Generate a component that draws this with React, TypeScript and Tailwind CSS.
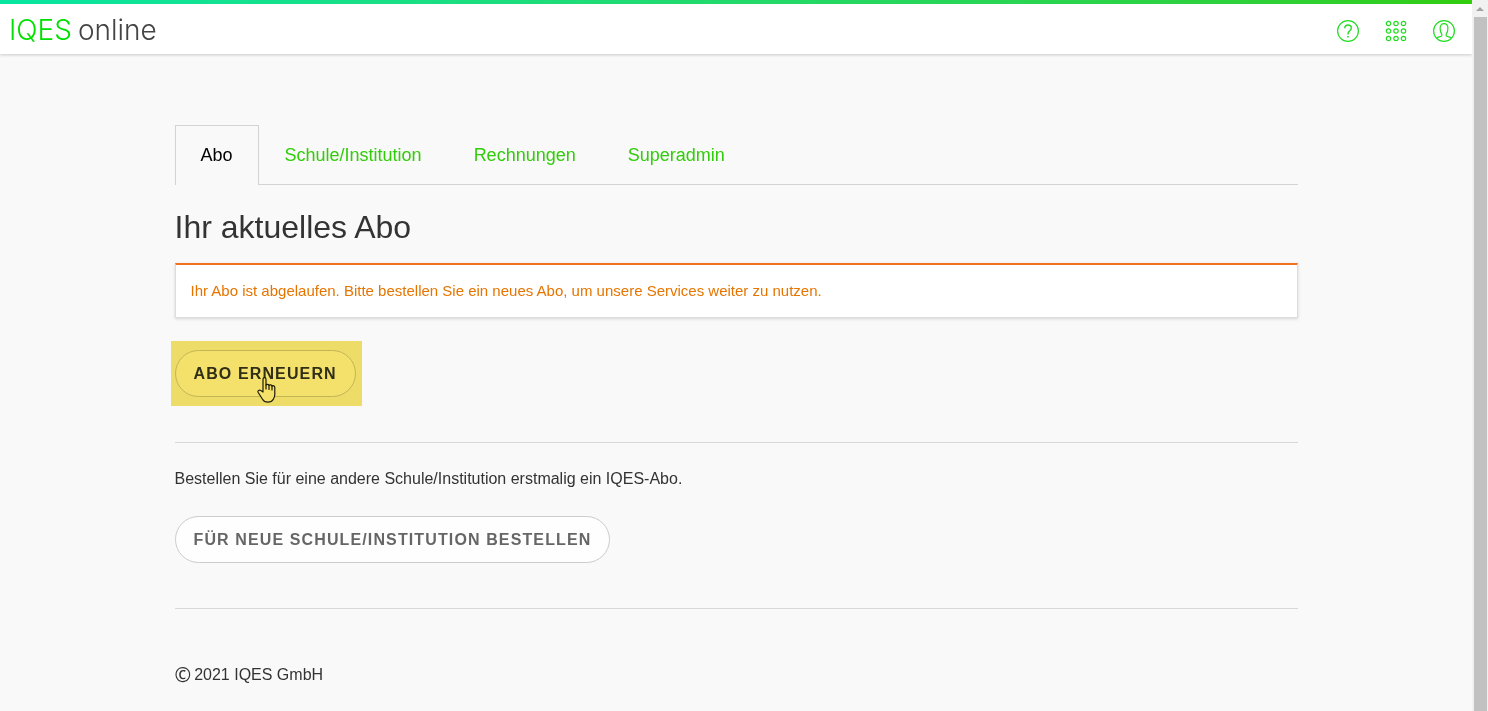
import React, { useState } from 'react'

const tabs = ['Abo', 'Schule/Institution', 'Rechnungen', 'Superadmin']

const HelpIcon = () => (
  <svg width="24" height="24" viewBox="0 0 24 24" fill="none" stroke="currentColor" strokeWidth="1.2" aria-hidden="true">
    <circle cx="12" cy="12" r="10.4" />
    <path d="M8.700 9.300C8.800 7.300 10 6 12 6C14 6 15.300 7.300 15.300 9C15.300 10.500 14.500 11.200 13.500 12.100C12.500 12.900 12 13.600 12 15V15.600" strokeWidth="1.400" />
    <path d="M12 17V18.600" strokeWidth="1.600" />
  </svg>
)

const AppsIcon = () => (
  <svg width="24" height="24" viewBox="0 0 24 24" fill="none" stroke="currentColor" strokeWidth="1.2" aria-hidden="true">
    {[4.5, 12, 19.5].map((cy) =>
      [4.5, 12, 19.5].map((cx) => <circle key={`${cx}-${cy}`} cx={cx} cy={cy} r="2.2" />)
    )}
  </svg>
)

const UserIcon = () => (
  <svg width="24" height="24" viewBox="0 0 24 24" fill="none" stroke="currentColor" strokeWidth="1.2" aria-hidden="true">
    <circle cx="12" cy="12" r="10.4" />
    <path d="M4.5 19C6 18 8 17.9 9.2 17.3C10 16.9 10.100 15.800 9.600 14.900C8.600 13.400 8.100 11.500 8.100 9.200C8.100 6.300 9.700 4.600 12 4.600C14.300 4.600 15.900 6.300 15.900 9.200C15.900 11.500 15.400 13.400 14.400 14.900C13.900 15.800 14 16.900 14.800 17.300C16 17.900 18 18 19.500 19" />
  </svg>
)

const HandPointer = () => (
  <svg
    className="absolute left-[82px] top-[26px] pointer-events-none"
    width="20"
    height="28"
    viewBox="0 0 20 28"
    fill="#f5e169"
    stroke="#1c1a08"
    strokeWidth="1.2"
    strokeLinejoin="round"
    strokeLinecap="round"
    aria-hidden="true"
  >
    <path d="M6 16V3.200C6 1.200 9 1.200 9 3.200V9C9.500 7.900 11.700 8.100 12 9.400C12.600 8.500 14.600 8.700 15 10.100C15.700 9.400 17.800 9.600 17.800 11.400V18.500C17.800 20.500 17.200 21.700 16.300 23.200C15.200 25.200 13.300 26.200 10.800 26.200C8.300 26.200 6.700 25.200 5.500 23.200L1.200 16.500C0.300 14.700 2.200 13.300 3.800 14.500Z" />
    <path d="M9 9V13M12 9.400V13.500M15 10.100V14" fill="none" />
  </svg>
)

const Header = () => (
  <header className="bg-white shadow-[0_1px_3px_rgba(0,0,0,0.2)]">
    <div className="h-1 bg-gradient-to-r from-[#06e5a0] to-[#32cd0a]" />
    <div className="h-[50px] pt-[2px] pl-[9px] pr-4 flex items-center justify-between">
      <a href="#" className="font-['Inter',sans-serif] font-light text-[28px] leading-8 flex gap-[6px]">
        <span className="text-[#00e000]">IQES</span>
        <span className="text-[#444444]">online</span>
      </a>
      <nav className="flex items-center gap-6 pt-[2px] text-[#22dd22]">
        <button aria-label="Hilfe"><HelpIcon /></button>
        <button aria-label="Apps"><AppsIcon /></button>
        <button aria-label="Profil"><UserIcon /></button>
      </nav>
    </div>
  </header>
)

const Scrollbar = () => (
  <div className="w-4 shrink-0 bg-[#f1f1f1] flex flex-col" aria-hidden="true">
    <div className="h-[17px] flex items-center justify-center">
      <svg width="8" height="4" viewBox="0 0 8 4" fill="#a3a3a3">
        <path d="M4 0l4 4H0z" />
      </svg>
    </div>
    <div className="flex-1 ml-[2px] mr-px bg-[#c1c1c1]" />
  </div>
)

const buttonClass =
  'h-[47px] px-[18px] rounded-full border border-[#cccccc] bg-[#fefefe] text-base font-bold uppercase tracking-[0.07em] cursor-pointer'

export default function App() {
  const [active, setActive] = useState('Abo')

  return (
    <div className="min-h-screen flex bg-[#f9f9f9] font-['Liberation_Sans',sans-serif] text-[#333333]">
      <div className="flex-1 min-w-0">
        <Header />

        <main className="max-w-[1123px] mx-auto pt-[71px]">
          <div role="tablist" className="flex text-lg">
            {tabs.map((tab) => (
              <button
                key={tab}
                role="tab"
                aria-selected={tab === active}
                onClick={() => setActive(tab)}
                className={
                  tab === active
                    ? 'h-[60px] px-[25px] pb-px border border-b-0 border-[#d3d3d3] text-black'
                    : 'h-[60px] px-[26px] border-b border-[#d3d3d3] text-[#32cd0a]'
                }
              >
                {tab}
              </button>
            ))}
            <div className="flex-1 border-b border-[#d3d3d3]" />
          </div>

          <h1 className="mt-[22px] mb-4 text-[32px] leading-10">Ihr aktuelles Abo</h1>

          <div className="px-[15px] pt-[15px] pb-4 bg-white border border-t-2 border-[#dddddd] border-t-[#f37021] shadow-[0_1px_3px_rgba(0,0,0,0.15)] text-[15px] leading-[21px] text-[#e67500]">
            Ihr Abo ist abgelaufen. Bitte bestellen Sie ein neues Abo, um unsere Services weiter zu nutzen.
          </div>

          <section className="mt-8 pb-[45px] flex border-b border-[#d8d8d8]">
            <div className="relative">
              <button className={`${buttonClass} text-[#333333]`}>Abo erneuern</button>
              <div className="absolute -left-1 -top-[9px] -right-[6px] -bottom-[9px] bg-[#f4e26b] mix-blend-multiply pointer-events-none" />
              <HandPointer />
            </div>
          </section>

          <section className="pt-6 pb-[45px] border-b border-[#d8d8d8]">
            <p className="mb-[25px] leading-6">Bestellen Sie für eine andere Schule/Institution erstmalig ein IQES-Abo.</p>
            <button className={`${buttonClass} text-[#666666] block`}>Für neue Schule/Institution bestellen</button>
          </section>

          <footer className="pt-[54px] pb-3 leading-6 flex items-center gap-[3px]">
            <span className="font-['Noto_Sans',sans-serif] text-[20px] leading-6">©</span>
            <span>2021 IQES GmbH</span>
          </footer>
        </main>
      </div>
      <Scrollbar />
    </div>
  )
}
